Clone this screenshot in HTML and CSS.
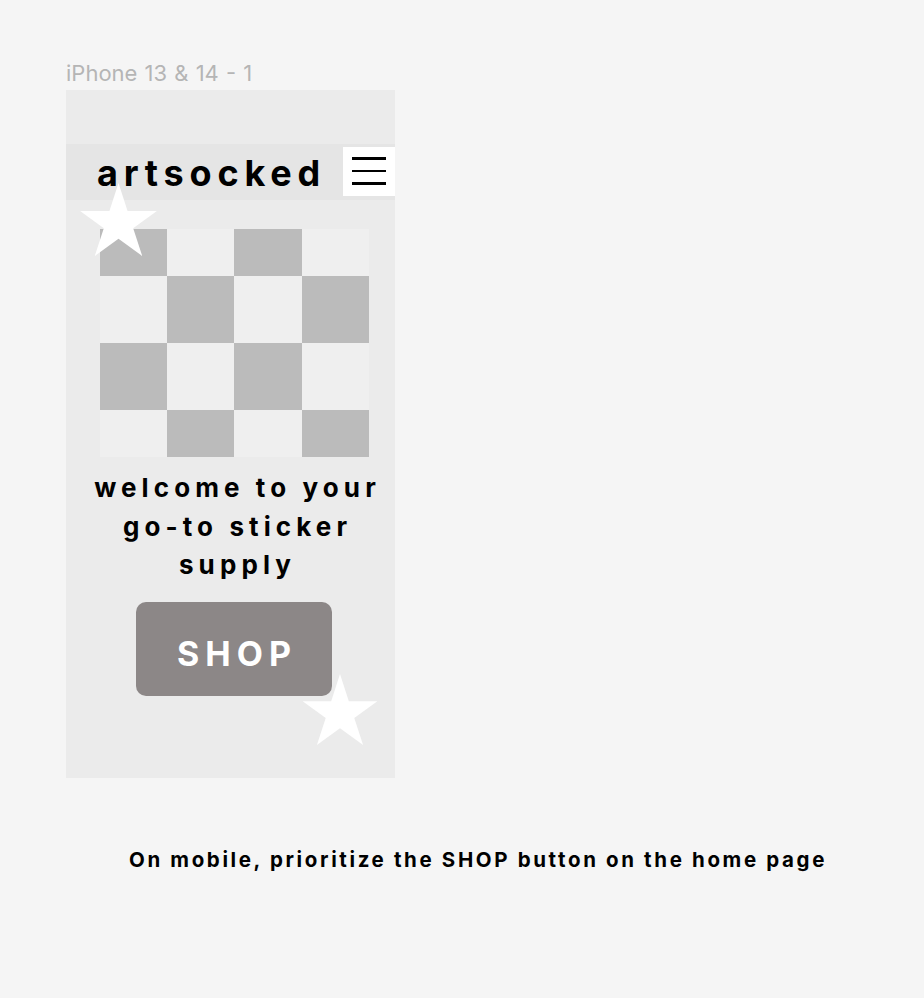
FILE: index.html
```html
<!DOCTYPE html>
<html>
<head>
<meta charset="utf-8">
<link rel="stylesheet" href="styles.css">
</head>
<body>
<div class="canvas">
  <div class="frame-label">iPhone 13 &amp; 14 - 1</div>
  <div class="phone">
    <header class="topbar">
      <div class="logo">artsocked</div>
      <button class="menu" aria-label="menu"><span></span><span></span><span></span></button>
    </header>
    <div class="checker">
      <div class="cell d"></div><div class="cell l"></div><div class="cell d"></div><div class="cell l"></div>
      <div class="cell l"></div><div class="cell d"></div><div class="cell l"></div><div class="cell d"></div>
      <div class="cell d"></div><div class="cell l"></div><div class="cell d"></div><div class="cell l"></div>
      <div class="cell l"></div><div class="cell d"></div><div class="cell l"></div><div class="cell d"></div>
    </div>
    <h1 class="welcome">welcome to your<br>go-to sticker<br>supply</h1>
    <div class="shop-wrap"><a class="shop">SHOP</a></div>
    <svg class="star star-top" viewBox="0 0 100 95"><polygon points="50,0 61.8,36.3 100,36.3 69.1,58.8 80.9,95 50,72.6 19.1,95 30.9,58.8 0,36.3 38.2,36.3" fill="#fff"/></svg>
    <svg class="star star-bottom" viewBox="0 0 100 95"><polygon points="50,0 61.8,36.3 100,36.3 69.1,58.8 80.9,95 50,72.6 19.1,95 30.9,58.8 0,36.3 38.2,36.3" fill="#fff"/></svg>
  </div>
  <p class="note">On mobile, prioritize the SHOP button on the home page</p>
</div>
</body>
</html>
```
FILE: styles.css
```css
* { box-sizing: border-box; }
html, body { margin: 0; padding: 0; background: #f5f5f5; }
body { font-family: "Inter", "Liberation Sans", sans-serif; width: 924px; height: 998px; overflow: hidden; }
.canvas { padding: 59px 0 0 66px; }
.frame-label { font-size: 22px; line-height: 28px; color: #b5b5b5; height: 31px; letter-spacing: 0; word-spacing: 1px; }
.phone { position: relative; width: 329px; height: 688px; background: #ebebeb; padding-top: 54px; }
.topbar { height: 56px; background: #e5e5e5; display: flex; align-items: center; justify-content: space-between; }
.logo { font-size: 36px; font-weight: 700; letter-spacing: 5.8px; color: #000; margin-left: 31px; margin-top: 2px; }
.menu { width: 52px; height: 49px; background: #fff; border: 0; padding: 0 9px; margin-top: -2px; display: flex; flex-direction: column; justify-content: center; gap: 10px; }
.menu span { display: block; height: 2.5px; background: #000; width: 34px; }
.checker { margin: 29px 0 0 34px; width: 269px; height: 228px; display: grid; grid-template-columns: 67px 67px 68px 67px; grid-template-rows: 47px 67px 67px 47px; }
.cell.d { background: #bbbbbb; }
.cell.l { background: #efefef; }
.welcome { margin: 12px 0 0 14px; font-size: 26px; font-weight: 700; line-height: 38.5px; letter-spacing: 5.1px; text-align: center; color: #000; }
.shop-wrap { margin-top: 17px; padding-left: 70px; }
.shop { display: flex; align-items: center; justify-content: center; width: 196px; height: 94px; background: #8c8787; border-radius: 10px; color: #fff; font-size: 34px; font-weight: 700; letter-spacing: 6px; padding: 9px 0 0 6px; }
.star { position: absolute; width: 77px; height: 73px; }
.star-top { left: 14px; top: 93px; }
.star-bottom { left: 236px; top: 584px; width: 76px; height: 71px; }
.note { margin: 69px 0 0 63px; font-size: 20.5px; font-weight: 700; letter-spacing: 2.63px; color: #000; }
```
